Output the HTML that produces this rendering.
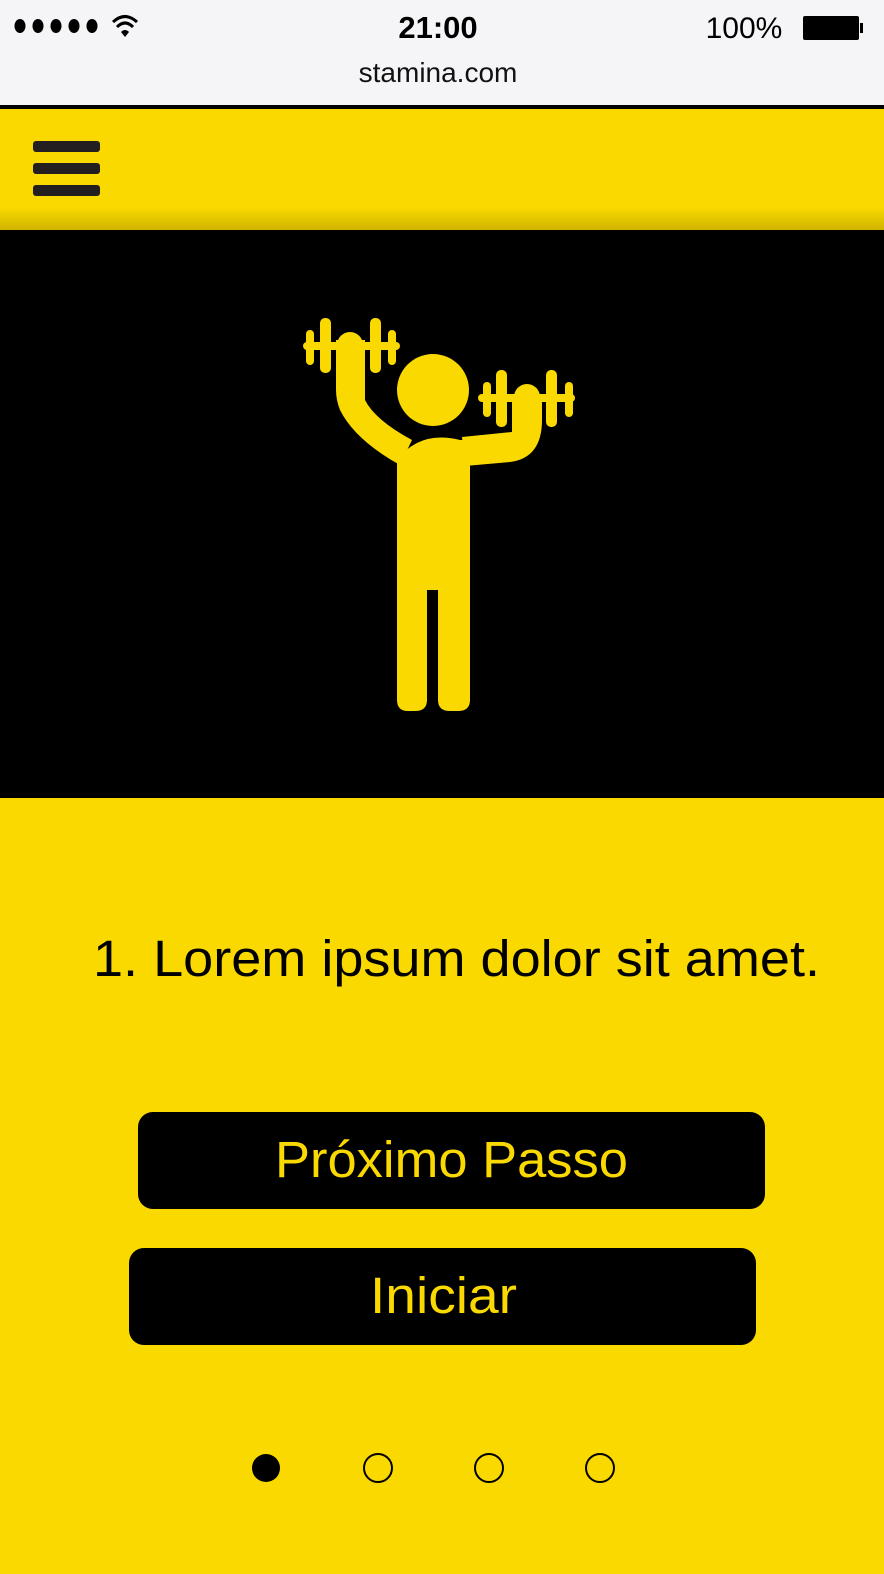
<!DOCTYPE html>
<html><head><meta charset="utf-8"><style>
html,body{margin:0;padding:0;width:884px;height:1574px;overflow:hidden;background:#F9D900;font-family:"Liberation Sans",sans-serif}
</style></head><body>
<svg width="884" height="1574" viewBox="0 0 884 1574" xmlns="http://www.w3.org/2000/svg" style="position:absolute;left:0;top:0">
<defs><linearGradient id="g" x1="0" y1="0" x2="0" y2="1"><stop offset="0" stop-color="#F9D900"/><stop offset="1" stop-color="#CFB300"/></linearGradient></defs>
<rect x="0" y="0" width="884" height="105" fill="#F5F5F7"/>
<rect x="0" y="105" width="884" height="4" fill="#000"/>
<rect x="0" y="109" width="884" height="121" fill="#F9D900"/>
<rect x="0" y="208" width="884" height="22" fill="url(#g)"/>
<!-- status -->
<g fill="#000"><ellipse cx="20" cy="26" rx="5.5" ry="7"/><ellipse cx="38" cy="26" rx="5.5" ry="7"/><ellipse cx="56" cy="26" rx="5.5" ry="7"/><ellipse cx="74" cy="26" rx="5.5" ry="7"/><ellipse cx="92" cy="26" rx="5.5" ry="7"/></g>
<path d="M113 22 Q125 11 137 22" stroke="#000" stroke-width="3" fill="none"/><path d="M117 27 Q125 19 133 27" stroke="#000" stroke-width="3" fill="none"/><path d="M121 32 L125 37 L129 32 Q125 28 121 32Z" fill="#000"/>
<text x="438" y="38" font-size="31" font-weight="bold" text-anchor="middle" fill="#000">21:00</text>
<text x="744" y="38" font-size="30" text-anchor="middle" fill="#000">100%</text>
<rect x="803" y="16" width="56" height="24" rx="2" fill="#000"/><rect x="860" y="23" width="3" height="10" fill="#000"/>
<text x="438" y="82" font-size="28" text-anchor="middle" fill="#111">stamina.com</text>
<!-- hamburger -->
<g fill="#231F20"><rect x="33" y="141" width="67" height="11" rx="3"/><rect x="33" y="163" width="67" height="11" rx="3"/><rect x="33" y="185" width="67" height="11" rx="3"/></g>
<!-- black hero -->
<rect x="0" y="230" width="884" height="568" fill="#000"/>
<g fill="#F9D900">
<circle cx="433" cy="390" r="36"/>
<path d="M397 460 Q420 430 460 440 L470 440 L470 700 Q470 711 458 711 L450 711 Q438 711 438 700 L438 590 L427 590 L427 700 Q427 711 415 711 L408 711 Q397 711 397 700 Z"/>
<path d="M336 340 L365 340 L365 400 Q375 420 412 440 L400 465 Q355 440 340 410 Q336 400 336 390 Z"/>
<path d="M512 395 L542 395 L542 420 Q542 458 510 462 L465 466 L462 437 L512 432 Z"/>
<rect x="303" y="342" width="97" height="8" rx="4"/>
<rect x="306" y="330" width="8" height="35" rx="4"/>
<rect x="320" y="318" width="11" height="55" rx="5"/>
<rect x="370" y="318" width="11" height="55" rx="5"/>
<rect x="388" y="330" width="8" height="35" rx="4"/>
<circle cx="350" cy="345" r="13"/>
<rect x="478" y="394" width="97" height="8" rx="4"/>
<rect x="483" y="382" width="8" height="35" rx="4"/>
<rect x="496" y="370" width="11" height="57" rx="5"/>
<rect x="546" y="370" width="11" height="57" rx="5"/>
<rect x="565" y="382" width="8" height="35" rx="4"/>
<circle cx="527" cy="397" r="13"/>
</g>
<text x="93" y="976" font-size="51" fill="#000" textLength="727" lengthAdjust="spacingAndGlyphs">1. Lorem ipsum dolor sit amet.</text>
<rect x="138" y="1112" width="627" height="97" rx="15" fill="#000"/>
<text x="275" y="1177" font-size="51" fill="#F9D900" textLength="353" lengthAdjust="spacingAndGlyphs">Próximo Passo</text>
<rect x="129" y="1248" width="627" height="97" rx="15" fill="#000"/>
<text x="370" y="1313" font-size="51" fill="#F9D900" textLength="147" lengthAdjust="spacingAndGlyphs">Iniciar</text>
<circle cx="266" cy="1468" r="14" fill="#000"/>
<circle cx="378" cy="1468" r="14" fill="none" stroke="#000" stroke-width="2"/>
<circle cx="489" cy="1468" r="14" fill="none" stroke="#000" stroke-width="2"/>
<circle cx="600" cy="1468" r="14" fill="none" stroke="#000" stroke-width="2"/>
</svg>
</body></html>
